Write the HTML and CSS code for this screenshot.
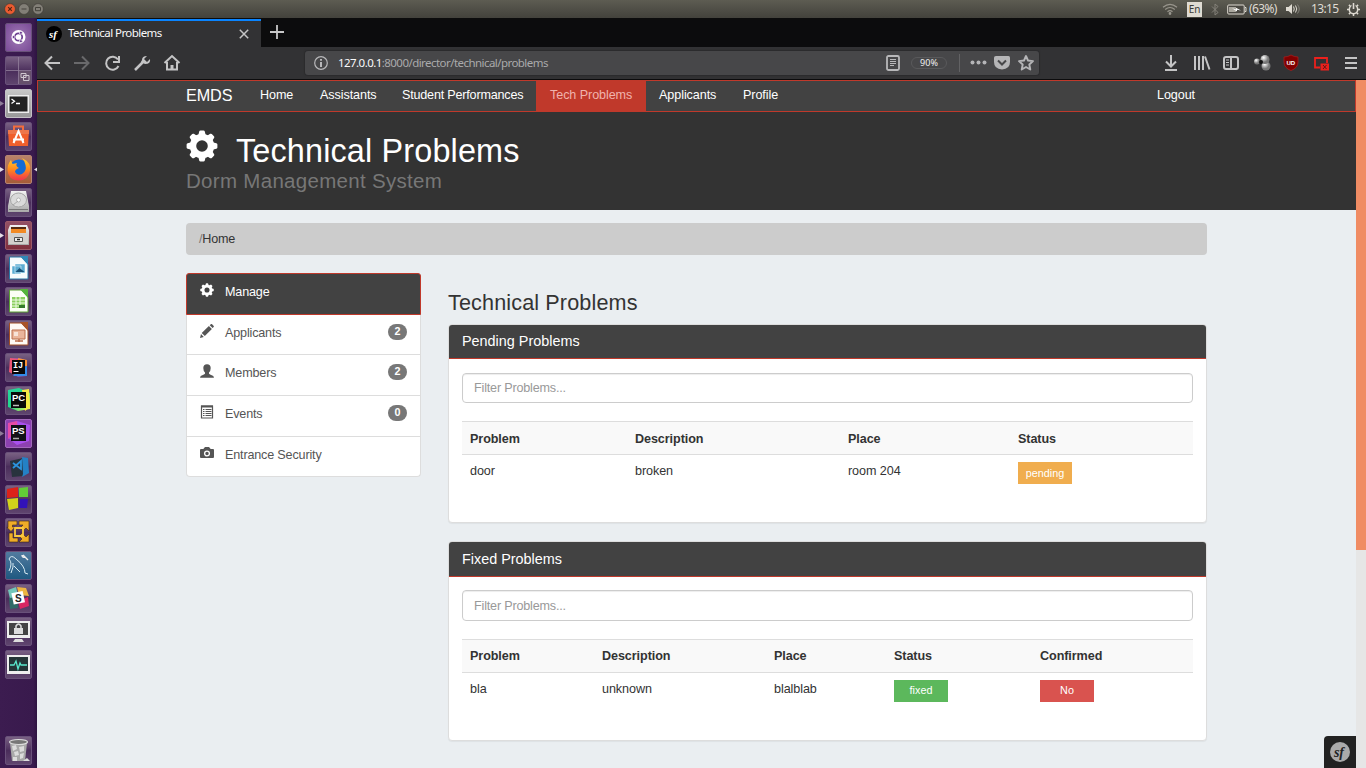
FILE: index.html
```html
<!DOCTYPE html>
<html lang="en">
<head>
<meta charset="utf-8">
<title>Technical Problems</title>
<link rel="stylesheet" href="styles.css">
</head>
<body>
<svg width="0" height="0" class="defs">
  <defs>
    <symbol id="gear" viewBox="0 0 32 32">
      <g fill="currentColor">
        <path id="tooth" d="M12 6.500 13.200 1.600Q13.500.6 14.500.6h3q1 0 1.300 1L20 6.500zM12 25.500l1.200 4.900q.3 1 1.300 1h3q1 0 1.300-1l1.200-4.900z"/>
        <use href="#tooth" transform="rotate(45 16 16)"/><use href="#tooth" transform="rotate(90 16 16)"/><use href="#tooth" transform="rotate(135 16 16)"/>
      </g>
      <circle cx="16" cy="16" r="9" fill="none" stroke="currentColor" stroke-width="6.400"/>
    </symbol>
    <linearGradient id="metal" x2="0" y2="1"><stop stop-color="#f2f2f2"/><stop offset="1" stop-color="#a9a9a9"/></linearGradient>
    <linearGradient id="fox" x2="0" y2="1"><stop stop-color="#ffd02e"/><stop offset=".5" stop-color="#ff8a1d"/><stop offset="1" stop-color="#f0334f"/></linearGradient>
    <linearGradient id="rainbow" x2="1" y2="1"><stop stop-color="#28d4a0"/><stop offset=".5" stop-color="#21d789"/><stop offset="1" stop-color="#fcf84a"/></linearGradient>
    <radialGradient id="ball" cx=".35" cy=".3"><stop stop-color="#fff"/><stop offset="1" stop-color="#777"/></radialGradient>
  </defs>
</svg>

<header class="topbar">
  <div class="win-buttons">
    <svg width="40" height="12" viewBox="0 0 40 12"><g stroke="#3a3833" stroke-width=".6"><circle cx="6" cy="6" r="5.400" fill="#ea5b30"/><circle cx="20" cy="6" r="5.400" fill="#827f77"/><circle cx="34" cy="6" r="5.400" fill="#827f77"/></g><path d="m4.200 4.200 3.600 3.600m0-3.600L4.200 7.800" stroke="#4a2415" stroke-width="1.100"/><path d="M17.500 6h5M31.500 4.500h5v3.200h-5z" fill="none" stroke="#45433d"/></svg>
  </div>
  <div class="indicators">
    <svg class="wifi" width="16" height="12" viewBox="0 0 16 12" fill="none" stroke="#99968d" stroke-width="1.200"><path d="M1 4.300q7-5.800 14 0M3.200 6.500q4.800-4 9.600 0M5.500 8.700q2.500-2 5 0"/><circle cx="8" cy="10.500" r=".8" fill="#ccc"/></svg>
    <span class="lang">En</span>
    <svg class="bt" width="8" height="13" viewBox="0 0 8 13" fill="none" stroke="#85827a"><path d="m1 3.500 6 6L4 12V1l3 2.500-6 6"/></svg>
    <svg class="battery" width="20" height="11" viewBox="0 0 20 11"><rect x=".7" y="1" width="16.500" height="9" rx="1" fill="#4b4943" stroke="#dfdbd2"/><path d="M18 3.500h1v4h-1" fill="none" stroke="#dfdbd2"/><path d="M2 3h7v5H2z" fill="#aaa79e"/><path d="m5 4.200 4 1.300V3.800l5 2.700-4-.8v1.700z" fill="#fff"/></svg>
    <span class="percent">(63%)</span>
    <svg class="sound" width="17" height="12" viewBox="0 0 17 12"><path d="M1 4h2.500L7 1v10L3.500 8H1z" fill="#dfdbd2"/><path d="M8.500 3.500q1.500 2.500 0 5M10.500 2.500q2.500 3.500 0 7" fill="none" stroke="#dfdbd2"/><path d="M12.500 1.500q3.500 4.500 0 9" fill="none" stroke="#85827a"/></svg>
    <span class="clock">13:15</span>
    <svg class="power" width="13" height="13" viewBox="0 0 13 13" fill="none" stroke="#dfdbd2"><circle cx="6.500" cy="6.500" r="4.200" stroke-width="1.500"/><path d="M6.500 11v2M0 6.500h2m9 0h2M1.900 1.900l1.400 1.400m7.800-1.400L9.700 3.300M1.900 11.100l1.400-1.400m7.800 1.400L9.700 9.700" stroke-width="1.500"/><path d="M6.500 0v6" stroke="#514f48" stroke-width="4"/><path d="M6.500 0v6" stroke-width="1.600"/></svg>
  </div>
</header>

<div class="desktop">
  <nav class="launcher">
    <div class="tile dash"><svg viewBox="0 0 27 29"><circle cx="13.500" cy="14" r="7" fill="#fff"/><circle cx="13.500" cy="14" r="3.700" fill="none" stroke="#6b3e90" stroke-width="1.700"/><g fill="#6b3e90" stroke="#fff" stroke-width=".7"><circle cx="8.700" cy="14" r="1.500"/><circle cx="15.900" cy="9.800" r="1.500"/><circle cx="15.900" cy="18.200" r="1.500"/></g></svg></div>
    <div class="tile"><svg viewBox="0 0 27 29"><path d="M1 14.500h25M13.500 1v27" stroke="#93809c" stroke-width=".8"/><rect x="14" y="15" width="12" height="13" fill="#66506c"/><path d="M16 17.500h5v4h-5zM18.500 19.500h5.500v5h-5.500z" fill="#66506c" stroke="#cfc6cf"/></svg></div>
    <div class="tile silver"><svg viewBox="0 0 27 29"><rect x="3" y="6" width="21" height="18" fill="#eee"/><rect x="4.500" y="7.500" width="18" height="15" fill="#222"/><path d="m6.500 10 3 2.300-3 2.200m4.500 0h4" fill="none" stroke="#fff" stroke-width="1.300"/></svg><i class="dot"></i></div>
    <div class="tile"><svg viewBox="0 0 27 29"><path d="M9 8V4.500h9V8" fill="none" stroke="#f36c3d" stroke-width="2"/><path d="M3 8h21l-1 16H4z" fill="#f05f2c"/><path d="M3 8h21v4H3z" fill="#ed764b"/><path d="m8.500 21 5-12 5 12M8 17.500h11" fill="none" stroke="#fff" stroke-width="2"/></svg></div>
    <div class="tile copper"><svg viewBox="0 0 27 29"><circle cx="14" cy="14.500" r="10" fill="#146bd5"/><path d="M17 3q10 5 8 13-2 9.500-11.500 9.500Q3 25 2.500 15q0-6 3.500-10l1.500 4 4.500-1q-2 3 2 5-4 1.500-4 4 2 4 7 2 5-3 3.500-9-.500-4-3.500-7z" fill="url(#fox)"/></svg><i class="dot full"></i><i class="dot right full"></i></div>
    <div class="tile"><svg viewBox="0 0 27 29"><path d="M6 3h15l3 15v6H3v-6z" fill="url(#metal)"/><ellipse cx="13.500" cy="12" rx="8" ry="7" fill="#dadada" stroke="#a5a5a5"/><circle cx="13.500" cy="12" r="2" fill="#f8f8f8" stroke="#999" stroke-width=".6"/><path d="M4 21.500h19" stroke="#777"/><path d="m13 13-5 4" stroke="#aaa"/></svg></div>
    <div class="tile wine"><svg viewBox="0 0 27 29"><path d="M5 4h17l2 5v15H3V9z" fill="url(#metal)"/><path d="M6 6h15v6H6z" fill="#552b10"/><path d="M6 8h15v4H6z" fill="#f18a24"/><path d="M4 13h19v10H4z" fill="#d3d1ce"/><path d="M9.500 16.500h8v4h-8z" fill="#ededed" stroke="#555"/><path d="M12 18.500h3" stroke="#222" stroke-width="1.500"/></svg><i class="dot full"></i></div>
    <div class="tile"><svg viewBox="0 0 27 29"><path d="M4.500 3h12L23 10v15H4.500z" fill="#f7fbfc" stroke="#2878a4"/><path d="M15 2h8v9z" fill="#3187b7"/><path d="M7 12h9v8H7zM10 10h10v9H10z" fill="#5bacd2" stroke="#fff" stroke-width=".5"/><path d="m10.500 18 4-4 5 4z" fill="#195277"/></svg></div>
    <div class="tile"><svg viewBox="0 0 27 29"><path d="M4.500 3h12L23 10v15H4.500z" fill="#fbfff5" stroke="#5a9f35"/><path d="M15 2h8v9z" fill="#55b53c"/><path d="M7 10h13v11H7z" fill="#8bcf60"/><path d="M7 13h13M7 16h13M7 19h13M11 10v11m4-11v11" stroke="#effbe5"/><path d="M14 18h6v3h-6z" fill="#357b2c"/></svg></div>
    <div class="tile"><svg viewBox="0 0 27 29"><path d="M4.500 3h12L23 10v15H4.500z" fill="#fffaf5" stroke="#a14f24"/><path d="M15 2h8v9z" fill="#a85329"/><path d="M7 10h13v9H7z" fill="#eab59b" stroke="#ba6e4d"/><path d="M9 12h4v4H9z" fill="#f7e3d8"/><path d="M10 21h8m-4-2v3" stroke="#ba6e4d" stroke-width="1.500"/></svg></div>
    <div class="tile"><svg viewBox="0 0 27 29"><path d="M5 5h10l7 3v15l-9 1-8-5z" fill="#7458b6"/><path d="m5 5 11 1-4 17-8-4z" fill="#ed5574"/><path d="m13 5 9 2v6l-8 1z" fill="#f99237"/><path d="m14 15 8-2v10H8z" fill="#348be8"/><rect x="7" y="7" width="13" height="14" fill="#090909"/><text x="8" y="15" class="ij">IJ</text><path d="M8.500 18.500h5" stroke="#fff"/></svg></div>
    <div class="tile"><svg viewBox="0 0 27 29"><path d="M3 4 14 2l11 5v16l-12 2-10-4z" fill="url(#rainbow)"/><path d="m17 4 7-1 1 18-5 4z" fill="#f5e944"/><rect x="6" y="6" width="15" height="16" fill="#090909"/><text x="7" y="15" class="jet">PC</text><path d="M8 19.500h6" stroke="#bbb" stroke-width="1.500"/></svg></div>
    <div class="tile purple"><svg viewBox="0 0 27 29"><path d="m3 5 9-3 13 4-1 16-12 4-9-7z" fill="#a950ed"/><path d="m3 4 9-2 1 10-10 8z" fill="#e64ba6"/><rect x="6" y="6" width="15" height="16" fill="#111017"/><text x="7" y="15" class="jet">PS</text><path d="M8 19.500h6" stroke="#aaa" stroke-width="1.500"/></svg><i class="dot"></i></div>
    <div class="tile"><svg viewBox="0 0 27 29"><path d="m5 9 13-3 3 2v13l-3 3-11 1z" fill="#28333e"/><path d="m17 5 6 1 1 15-7 4 1-3z" fill="#2481c5"/><path d="m8 11 8 6V9l-8 7" fill="none" stroke="#2b93dd" stroke-width="1.800"/></svg></div>
    <div class="tile"><svg viewBox="0 0 27 29"><path d="m2 4 11-2v10L2 13z" fill="#dc2219"/><path d="m14 3 9-1v10h-9z" fill="#62cc37"/><path d="m2 14 11-1v10L4 25z" fill="#d2d31b"/><path d="M15 14h8l-1 9h-8z" fill="#3212b8"/></svg></div>
    <div class="tile"><svg viewBox="0 0 27 29"><g stroke="#3b2713" stroke-width=".6"><path d="M3 3h9v4H7.500v2H10L6 13.500 2 9.500h1zM14 3h10v10l-3-3-3 3-3-3 3-3h-4zM4 15h4v5h5v4H4zM24 24H14l3-3-3-3 3-3 4 4 3-3z" fill="#efac28"/></g><path d="M10 10h8v8h-8z" fill="none" stroke="#fac940" stroke-width="1.800"/></svg></div>
    <div class="tile blue"><svg viewBox="0 0 27 29"><path d="M4 20Q8 12 4 8q2-5 7 0 9 7 9 14l3 1M6 22q3-7 2-10m1 3 6 6" fill="none" stroke="#d7eaf2"/><path d="m18 4 5 5m-6-5q0 3 3 2" fill="none" stroke="#eee" stroke-width="1.400"/></svg></div>
    <div class="tile"><svg viewBox="0 0 27 29"><path d="m3 6 8-3 2 8-8 4z" fill="#72c6b9"/><path d="m12 3 9 1 3 8-10-1z" fill="#ecb542"/><path d="m4 14 8-1 1 11-8 1z" fill="#306b67"/><path d="m13 17 10-4 1 9-9 3z" fill="#d92763"/><rect x="7.500" y="8" width="11.500" height="11.500" fill="#fff" transform="rotate(-12 13 14)"/><text x="10" y="17.500" class="slack">S</text></svg></div>
    <div class="tile"><svg viewBox="0 0 27 29"><path d="M2 4h23v17H2z" fill="#eee"/><path d="M4 6h19v12H4z" fill="#444"/><path d="M10 22h7l2 3H8z" fill="#ddd"/><path d="M11 12V9q2.500-4 5 0v3" fill="none" stroke="#ddd" stroke-width="1.500"/><path d="M9 11h9v6H9z" fill="#ddd"/></svg></div>
    <div class="tile"><svg viewBox="0 0 27 29"><path d="M2 5h23v19H2z" fill="#eee"/><path d="M4 7h19v14H4z" fill="#243536"/><path d="M5 15h4l2-4 2 8 2-6 1 2h6" fill="none" stroke="#58e8cb" stroke-width="1.300"/></svg></div>
    <div class="tile trash"><svg viewBox="0 0 27 29"><path d="M5 7h17l-2 18H7z" fill="#a9a9a9"/><ellipse cx="13.500" cy="6" rx="9" ry="2.500" fill="#777" stroke="#ddd" stroke-width="1.200"/><g fill="#dcdcdc"><path d="m7 10 4-1 1 4-4 2zM14 11l5-1v5l-4 1zM9 16l4-1 1 4-4 1zM15 18l4-1-1 5-3 1zM8 21l4 0v4H8z"/></g><path d="m18 25 4-3 3 3z" fill="#ddd"/></svg></div>
  </nav>

  <main class="browser">
    <div class="tabstrip">
      <div class="tab">
        <svg width="16" height="16" viewBox="0 0 16 16"><circle cx="8" cy="8" r="8"/><text x="3" y="11.500" class="sf white">sf</text></svg>
        <span class="tab-title">Technical Problems</span>
        <svg class="tab-close" width="10" height="10" viewBox="0 0 10 10"><path d="m.8.8 8.400 8.400m0-8.400L.8 9.200" stroke="#c5c5c6" stroke-width="1.500"/></svg>
      </div>
      <svg class="newtab" width="14" height="14" viewBox="0 0 14 14"><path d="M7 0v14M0 7h14" stroke="#c7c7c8" stroke-width="1.800"/></svg>
    </div>
    <div class="toolbar">
      <svg class="tool-left" width="140" height="18" viewBox="0 0 140 18" fill="none" stroke="#c4c4c5" stroke-width="2">
        <path d="M16 9H1.500M8 2.500 1.500 9 8 15.500"/><path d="M30 9h14.500M38 2.500 44.500 9 38 15.500" stroke="#69696b"/>
        <path d="M74 5.500A6.500 6.500 0 1 0 74.500 12M75 2v6h-6"/><path d="m91 16 8-8" stroke-width="2.500"/><path d="M98 6q0-4 5-4l-3 3 3 3 3-3q1 5-5 5l-4-2z" fill="#c4c4c5" stroke="none"/>
        <path d="m120.500 9 7.500-7 7.500 7M123 8v7.500h10V8"/><path d="M126.500 16v-5h3v5z" fill="#c4c4c5" stroke="none"/>
      </svg>
      <div class="urlbar">
        <svg class="info" width="14" height="14" viewBox="0 0 14 14" fill="none" stroke="#b8b8ba"><circle cx="7" cy="7" r="6.300" stroke-width="1.200"/><path d="M7 6v5M7 3v1.700" stroke-width="2"/></svg>
        <span class="url"><b>127.0.0.1</b>:8000/director/technical/problems</span>
        <svg class="reader" width="14" height="16" viewBox="0 0 14 16" fill="none" stroke="#b8b8ba"><rect x="1" y="1" width="12" height="14" rx="1.500" stroke-width="1.800"/><path d="M4 4.500h6M4 6.500h6M4 8.500h6M4 10.500h4"/></svg>
        <span class="zoom">90%</span>
        <i class="sep"></i>
        <svg class="page-tools" width="66" height="17" viewBox="0 0 66 17" fill="#b5b5b7"><circle cx="2.500" cy="8.500" r="2"/><circle cx="8.500" cy="8.500" r="2"/><circle cx="14.500" cy="8.500" r="2"/><path d="M26 2h12.500q1.500 0 1.500 1.500V8q0 7-8 7.500-8-.5-8-7.500V3.500Q24 2 26 2z"/><path d="m28 6.500 4 4 4-4" fill="none" stroke="#474749" stroke-width="2"/><path d="m56 2 2 4.500 5 .6-3.700 3.400 1 5L56 13l-4.300 2.500 1-5L49 7.100l5-.6z" fill="none" stroke="#b5b5b7" stroke-width="1.900" stroke-linejoin="round"/></svg>
      </div>
      <svg class="tool-right" width="196" height="18" viewBox="0 0 196 18" fill="none" stroke="#c4c4c5" stroke-width="2">
        <path d="M8 1v11M3 7.500l5 5 5-5M2 16h12"/>
        <path d="M32 2v14M36 2v14M40 2v14M42 2.500l4.500 13"/>
        <rect x="61" y="3" width="14" height="12" rx="2"/><path d="M68 3v12"/><path d="M63 6h3M63 8.500h3M63 11h3" stroke-width="1"/>
        <g stroke="none" fill="url(#ball)"><circle cx="94" cy="7.500" r="3"/><circle cx="103" cy="12" r="4.500"/><circle cx="102" cy="5.500" r="4.500"/><circle cx="98" cy="8" r="2" fill="#111"/></g>
        <path d="M121 3q4 0 7-2 3 2 7 2v5q0 6-7 8.500-7-2.500-7-8.500z" fill="#800000" stroke="#b11c1c" stroke-width=".7"/><text x="123.500" y="10.500" class="ud">UD</text>
        <path d="M157 13.500h-5V4h12v5" stroke="#ed201c" stroke-width="1.800"/><path d="M157.500 9.500h8.500v7h-8.500z" fill="#ed201c" stroke="none"/><path d="m160 11 3.500 4m0-4-3.500 4" stroke="#5c1919" stroke-width="1"/>
        <path d="M182 4h12M182 9h12M182 14h12"/>
      </svg>
    </div>

    <div class="page">
      <div class="document">
        <nav class="navbar">
          <a class="brand">EMDS</a>
          <a class="n1">Home</a><a class="n2">Assistants</a><a class="n3">Student Performances</a><a class="active">Tech Problems</a><a class="n5">Applicants</a><a class="n6">Profile</a><a class="logout">Logout</a>
        </nav>
        <section class="hero">
          <div class="hero-title"><svg class="big-gear"><use href="#gear"/></svg><h1>Technical Problems</h1></div>
          <p>Dorm Management System</p>
        </section>
        <div class="container">
          <div class="crumb"><span>/</span>Home</div>
          <div class="columns">
            <aside class="list">
              <a class="item head"><svg viewBox="0 0 32 32"><use href="#gear"/></svg>Manage</a>
              <a class="item"><svg viewBox="0 0 14 14" fill="#555"><path d="m0 14 1-4 2.800 2.900zM1.700 9 8.900 1.900l3 3L4.800 12zM9.700 1.200 10.800.2q.7-.5 1.300.1l1.400 1.500q.7.700.1 1.300l-1 1z"/></svg>Applicants<em>2</em></a>
              <a class="item"><svg viewBox="0 0 14 14" fill="#555"><path d="M3.300 4Q3.300.2 7 .2T10.700 4q0 3-1.700 4.500v1.300q1 .8 2.200 1.200 2.800.7 2.800 2.700H0Q0 11.700 2.800 11 4 10.600 5 9.800V8.500Q3.300 7 3.300 4z"/></svg>Members<em>2</em></a>
              <a class="item"><svg viewBox="0 0 14 14" fill="none" stroke="#555"><path d="M1.500 1h11v12h-11z" stroke-width="1.200"/><path d="M1 1.500h12" stroke-width="2"/><path d="M3 4.500h1.500m1 0h6M3 6.500h1.500m1 0h6M3 8.500h1.500m1 0h6M3 10.500h1.500m1 0h6"/></svg>Events<em>0</em></a>
              <a class="item"><svg viewBox="0 0 14 14" fill="#555"><path d="M1 3h2.300L5 1h4l1.700 2H13q1 0 1 1v7q0 1-1 1H1q-1 0-1-1V4q0-1 1-1z"/><circle cx="7" cy="7.500" r="2.400" fill="#555" stroke="#fff" stroke-width="1.300"/></svg>Entrance Security</a>
            </aside>
            <section class="content">
              <h2>Technical Problems</h2>
              <article class="panel">
                <h3>Pending Problems</h3>
                <div class="body">
                  <input type="text" placeholder="Filter Problems...">
                  <table>
                    <colgroup><col class="p1"><col class="p2"><col class="p3"><col></colgroup>
                    <tr><th>Problem</th><th>Description</th><th>Place</th><th>Status</th></tr>
                    <tr><td>door</td><td>broken</td><td>room 204</td><td><span class="btn warn">pending</span></td></tr>
                  </table>
                </div>
              </article>
              <article class="panel second">
                <h3>Fixed Problems</h3>
                <div class="body">
                  <input type="text" placeholder="Filter Problems...">
                  <table>
                    <colgroup><col class="f1"><col class="f2"><col class="f3"><col class="f4"><col></colgroup>
                    <tr><th>Problem</th><th>Description</th><th>Place</th><th>Status</th><th>Confirmed</th></tr>
                    <tr><td>bla</td><td>unknown</td><td>blalblab</td><td><span class="btn good">fixed</span></td><td><span class="btn bad">No</span></td></tr>
                  </table>
                </div>
              </article>
            </section>
          </div>
        </div>
        <div class="debug"><svg width="20" height="20" viewBox="0 0 20 20"><circle cx="10" cy="10" r="10" fill="#aaa"/><text x="4" y="14.500" class="sf dark">sf</text></svg></div>
      </div>
      <div class="scrollbar"><div class="thumb"></div></div>
    </div>
  </main>
</div>
</body>
</html>
```
FILE: styles.css
```css
* { box-sizing: border-box; }
body { margin: 0; width: 1366px; height: 768px; overflow: hidden; font: 12.6px/18px "Liberation Sans", Arial, sans-serif; color: #333; background: #0c0c0d; }
svg { display: block; flex: none; }
.defs { position: absolute; }

.topbar { height: 18px; display: flex; justify-content: space-between; background: linear-gradient(#5d5c52, #43423c); color: #dfdbd2; font: 12px/18px "Noto Sans", sans-serif; }
.win-buttons { padding: 3px 0 0 4px; }
.indicators { display: flex; align-items: center; padding-right: 6px; }
.lang { width: 15px; height: 15px; background: #dfdbd2; color: #3c3b37; font-size: 10px; line-height: 15px; text-align: center; margin: 0 9px 0 9px; }
.battery { margin: 0 2px 0 8px; }
.percent { width: 28px; letter-spacing: -.65px; white-space: nowrap; }
.sound { margin-left: 8px; }
.clock { margin-left: 9px; width: 28px; letter-spacing: -.65px; }
.power { margin-left: 8px; }

.desktop { display: flex; height: 750px; }
.launcher { width: 37px; flex: none; background: linear-gradient(90deg, #3c1c50, #391a4d 90%, #2d1340); padding: 5px 5px 3px; display: flex; flex-direction: column; gap: 4px; }
.tile { position: relative; width: 27px; height: 29px; flex: none; border-radius: 2px; background: linear-gradient(#796183, #513561 45%, #4a2d5b 50%, #5f456e); border: 1px solid #69517a; }
.tile svg { width: 27px; height: 29px; margin: -1px; }
.dash { background: radial-gradient(#a17bb6, #7a4b97); }
.silver { background: linear-gradient(#c7c7c7, #999); border-color: #c4c1c6; }
.copper { background: linear-gradient(#b88169, #a65c38); border-color: #b58572; }
.wine { background: linear-gradient(#925064, #80303e); border-color: #9b5968; }
.purple { background: #8c41b0; border-color: #a269bb; }
.blue { background: linear-gradient(#527b9f, #1f5981); }
.trash { margin-top: auto; }
.dot { position: absolute; left: -6px; top: 11px; width: 4px; height: 5px; background: #8f7d99; clip-path: polygon(0 0, 100% 50%, 0 100%); }
.dot.full { background: #e5dfe8; }
.dot.right { left: 28px; clip-path: polygon(100% 0, 0 50%, 100% 100%); }
.ij { font: bold 8.500px "Liberation Mono", monospace; fill: #fff; }
.jet { font: bold 9.500px "Liberation Sans", sans-serif; fill: #fff; }
.slack { font: bold 10px "Liberation Sans", sans-serif; fill: #222; }
.sf { font: italic bold 11px "Liberation Serif", serif; }
.white { fill: #fff; }
.dark { font-size: 14px; fill: #222; }
.ud { font: bold 6px "Liberation Sans", sans-serif; fill: #fff; stroke: none; }

.browser { flex: 1; display: flex; flex-direction: column; min-width: 0; }
.tabstrip { height: 29px; display: flex; background: #0c0c0d; }
.tab { width: 224px; height: 28px; margin-top: 1px; border-top: 2px solid #0a84ff; background: #323234; display: flex; align-items: center; padding: 0 12px 0 9px; }
.tab-title { margin: -2px 0 0 6px; flex: 1; font: 11.5px/18px "Noto Sans", sans-serif; color: #f9f9fa; letter-spacing: -.57px; }
.newtab { margin: 7px 0 0 9px; }
.toolbar { height: 33px; background: #323234; border-bottom: 1px solid #0c0c0d; display: flex; align-items: center; padding: 0 9px 1px 7px; }
.urlbar { width: 734px; height: 24px; margin-left: 121px; border-radius: 3px; background: #474749; display: flex; align-items: center; padding: 0 3px 0 9px; box-shadow: 0 0 1px 1px #2b2b2d; }
.url { margin-left: 10px; width: 548px; white-space: nowrap; font: 11.5px/18px "Noto Sans", sans-serif; color: #aaaaab; letter-spacing: -.55px; }
.url b { font-weight: normal; color: #f9f9fa; }
.zoom { width: 36px; height: 12px; margin-left: 11px; border-radius: 6px; border: 1px solid #59595b; color: #f0f0f0; font: 9px/10px "Noto Sans", sans-serif; text-align: center; }
.sep { width: 1px; height: 18px; background: #626264; margin: 0 10px 0 12px; }
.tool-right { margin-left: auto; margin-right: -2px; }

.page { display: flex; height: 688px; }
.document { position: relative; width: 1319px; height: 688px; overflow: hidden; background: #eaeef1; letter-spacing: -.08px; }
.scrollbar { width: 10px; background: #e6e6e6; }
.thumb { height: 470px; background: #f08c64; }
.navbar { height: 32px; border: 1px solid #c0392b; background: #424242; color: #fff; display: flex; line-height: 29px; padding-left: 148px; }
.brand { font-size: 16.2px; width: 74px; }
.n1 { width: 60px; }
.n2 { width: 82px; }
.n3 { width: 134px; letter-spacing: -.2px; white-space: nowrap; }
.active { width: 110px; padding-left: 14px; background: #c0392b; color: #f0b3ad; }
.n5 { width: 97px; padding-left: 13px; }
.logout { margin-left: auto; padding-right: 160px; }
.hero { height: 98px; background: #333; padding: 18px 0 0 149px; }
.hero-title { display: flex; height: 40px; }
.big-gear { width: 32px; height: 32px; color: #fff; }
h1 { margin: 1px 0 0 18px; font-weight: normal; font-size: 32.4px; line-height: 41px; color: #fff; letter-spacing: .15px; white-space: nowrap; }
.hero p { margin: 0; font-size: 20.5px; line-height: 21px; color: #777; letter-spacing: .3px; }
.container { padding: 13px 149px 0; }
.crumb { height: 32px; border-radius: 4px; background: #ccc; padding-left: 13px; line-height: 32px; color: #333; letter-spacing: -.2px; }
.crumb span { color: #777; }
.columns { display: flex; padding-top: 18px; gap: 27px; }
.list { width: 235px; flex: none; letter-spacing: -.17px; }
.item { height: 41px; display: flex; padding: 9px 13px 0; border: 1px solid #ddd; border-top: 0; background: #fff; color: #555; line-height: 18px; }
.item svg { width: 14px; height: 14px; margin: 0 11px 0 0; }
.item.head { height: 42px; border: 1px solid #c0392b; border-radius: 3px 3px 0 0; background: #424242; color: #fff; }
.item:nth-child(2) { height: 40px; }
.item:last-child { height: 40px; border-radius: 0 0 4px 4px; }
.item em { margin-left: auto; width: 19px; height: 16px; border-radius: 9px; background: #777; color: #fff; font: bold 10.8px/15px "Liberation Sans", sans-serif; text-align: center; }
.content { width: 759px; }
h2 { margin: 0; padding-top: 17px; height: 51px; font-size: 21.6px; line-height: 25px; font-weight: normal; letter-spacing: .13px; }
.panel { height: 199px; border: 1px solid #ddd; border-radius: 4px; background: #fff; box-shadow: 0 1px 1px rgba(0,0,0,.05); margin-bottom: 18px; overflow: hidden; }
h3 { margin: 0; height: 34px; padding-left: 13px; background: #424242; border-bottom: 1px solid #c0392b; color: #fff; font-size: 14.4px; line-height: 32px; font-weight: normal; letter-spacing: 0; }
.body { padding: 14px 13px 0; }
.second { height: 200px; }
.second h3 { height: 35px; line-height: 34px; }
.second .body { padding-top: 13px; }
input { display: block; width: 100%; height: 30px; border: 1px solid #ccc; border-radius: 4px; padding: 0 11px; font: 12.6px "Liberation Sans", sans-serif; letter-spacing: -.18px; box-shadow: inset 0 1px 1px rgba(0,0,0,.075); margin-bottom: 18px; }
.second input { height: 31px; }
input::placeholder { color: #999; opacity: 1; }
table { width: 100%; border-collapse: collapse; table-layout: fixed; }
th { height: 33px; padding: 1px 8px 0; text-align: left; border-top: 1px solid #ddd; background: #f9f9f9; }
.second th { padding: 0 8px 1px; }
td { height: 40px; padding: 7px 8px 0; vertical-align: top; border-top: 1px solid #ddd; }
.p1 { width: 165px; }
.p2 { width: 213px; }
.p3 { width: 170px; }
.f1 { width: 132px; }
.f2 { width: 172px; }
.f3 { width: 120px; }
.f4 { width: 146px; }
.btn { display: block; width: 54px; height: 22px; color: #fff; font-size: 10.8px; line-height: 22px; text-align: center; letter-spacing: 0; }
.warn { background: #f0ad4e; }
.good { background: #5cb85c; line-height: 21px; }
.bad { background: #d9534f; line-height: 21px; }
.debug { position: absolute; right: 0; bottom: 0; width: 32px; height: 32px; padding: 6px; background: #222; border-radius: 4px 0 0 0; }
```
